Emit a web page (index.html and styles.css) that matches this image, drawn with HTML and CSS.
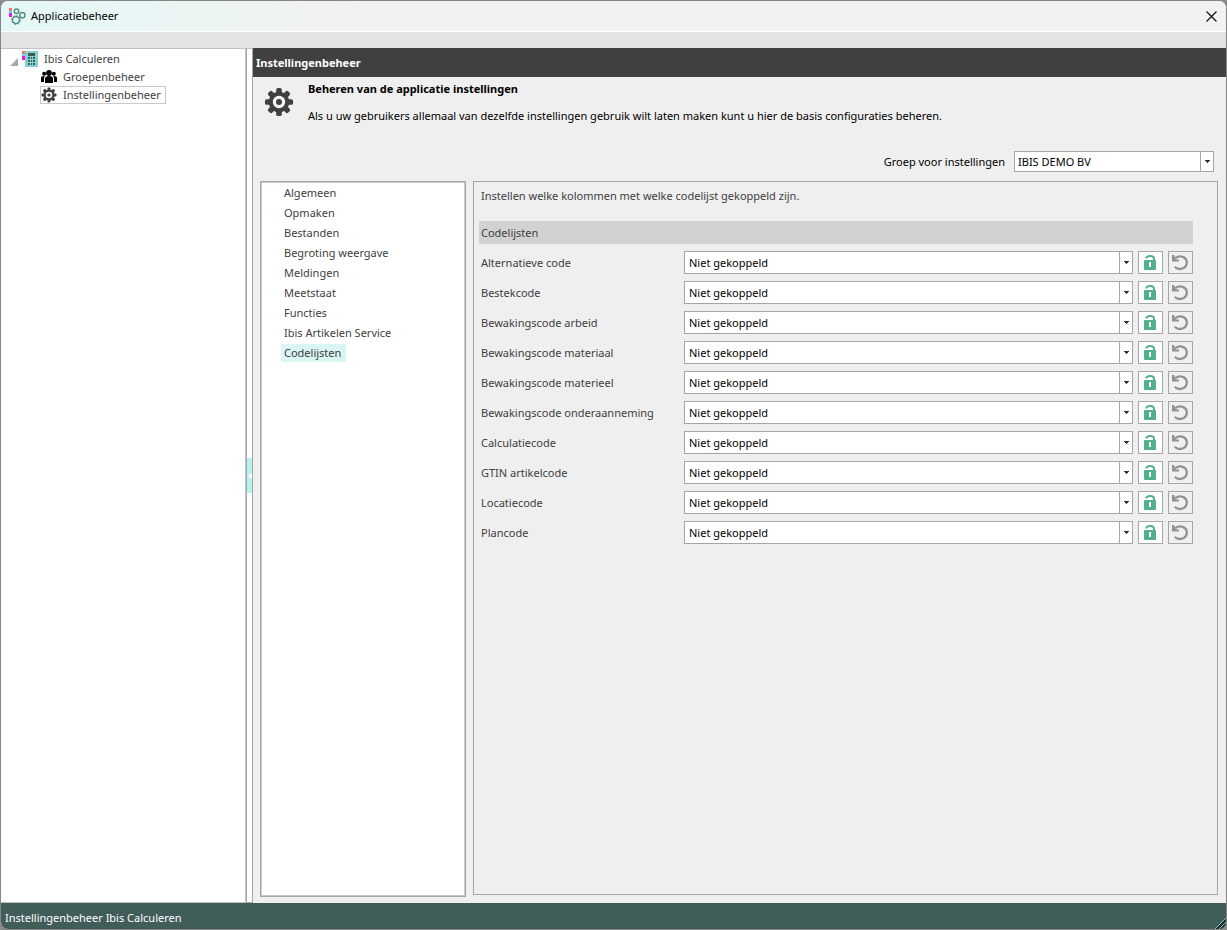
FILE: index.html
```html
<!DOCTYPE html>
<html lang="nl">
<head>
<meta charset="utf-8">
<title>Applicatiebeheer</title>
<link rel="stylesheet" href="styles.css">
</head>
<body>
<svg class="defs" aria-hidden="true">
  <symbol id="gear" viewBox="0 0 32 32">
    <g fill="#404040">
      <rect x="13" y="1" width="6" height="30" rx="2"/>
      <rect x="13" y="1" width="6" height="30" rx="2" transform="rotate(45 16 16)"/>
      <rect x="13" y="1" width="6" height="30" rx="2" transform="rotate(90 16 16)"/>
      <rect x="13" y="1" width="6" height="30" rx="2" transform="rotate(135 16 16)"/>
      <circle cx="16" cy="16" r="11"/>
    </g>
    <circle cx="16" cy="16" r="6.6" fill="#f4f4f4"/>
    <circle cx="16" cy="16" r="3.2" fill="#404040"/>
  </symbol>
  <symbol id="lock" viewBox="0 0 17 19">
    <path d="M4.200 5.600C4.200 2.200 12 2.200 12 6V9" fill="none" stroke="#52b188" stroke-width="2"/>
    <rect x="2" y="7" width="12" height="10" rx="1" fill="#52b188"/>
    <rect x="7" y="9" width="2" height="5" fill="#fff"/>
  </symbol>
  <symbol id="reset" viewBox="0 0 17 19">
    <path d="M3.500 5.200C7.500 1.800 14.800 3.600 14.800 9.500c0 6-7.800 8.600-12 4.300" fill="none" stroke="#929292" stroke-width="2.300"/>
    <path d="M0 2v6.500h7V6.400H4L2 2z" fill="#929292"/>
  </symbol>
  <symbol id="arrow" viewBox="0 0 5 3"><path d="M0 0h5v1H4v1H3v1H2V2H1V1H0z" fill="#333"/></symbol>
</svg>
<div class="window">
  <header class="titlebar">
    <svg class="logo" viewBox="0 0 17 17" aria-hidden="true">
      <path fill="#f0776a" d="M0 0h3v3H0z"/><path fill="#79c9ef" d="M0 3h3v2H0z"/><path fill="#e31be8" d="M0 5h3v4H0z"/>
      <g fill="none" stroke="#568f83" stroke-width="1.500">
        <circle cx="7.500" cy="3.200" r="2.200"/><circle cx="13.400" cy="7.200" r="2.600"/><circle cx="7" cy="12" r="3.500"/>
      </g>
      <circle cx="7" cy="12" r="4.400" fill="none" stroke="#568f83" stroke-width="1" stroke-dasharray="1.700 1.750"/>
    </svg>
    <h1 class="title">Applicatiebeheer</h1>
    <button class="close" aria-label="Sluiten"><svg viewBox="0 0 11 11" width="11" height="11"><path d="M.5.5l10 10m0-10l-10 10" stroke="#111" stroke-width="1.200"/></svg></button>
  </header>
  <div class="toolbar"></div>
  <div class="body">
    <nav class="tree">
      <a class="node root" href="#"><svg class="expander" viewBox="0 0 8 8"><path d="M8 0v8H0z" fill="#a6a6a6"/></svg><svg class="icon" viewBox="0 0 16 16"><path fill="#84d2ce" d="M3 0h13v16H3z"/><path fill="#f0776a" d="M0 0h3v3H0z"/><path fill="#79c9ef" d="M0 3h3v2H0z"/><path fill="#e31be8" d="M0 5h3v4H0z"/><path fill="#3e5d59" d="M6 2h7v3H6zM6 6h2v2H6zM9 6h1v2H9zM11 6h2v2h-2zM6 9h2v2H6zM9 9h1v2H9zM11 9h2v2h-2zM6 12h2v2H6zM9 12h1v2H9zM11 12h2v2h-2z"/></svg><span>Ibis Calculeren</span></a>
      <a class="node child" href="#"><svg class="icon" viewBox="0 0 16 16"><circle cx="8" cy="4" r="2.900"/><circle cx="3.200" cy="4.800" r="2"/><circle cx="12.800" cy="4.800" r="2"/><path d="M4 14V9.500Q4 7 8 7t4 2.500V14zM0 13V9q0-2 3-2h.800Q3 8 3 10v3zM16 13V9q0-2-3-2h-.800q.800 1 .800 3v3z"/></svg><span>Groepenbeheer</span></a>
      <a class="node child current" href="#" aria-current="page"><svg class="icon"><use href="#gear"/></svg><span>Instellingenbeheer</span></a>
    </nav>
    <div class="splitter"><button class="grip" aria-label="Paneel inklappen"><svg viewBox="0 0 4 6" width="4" height="6"><path d="M4 0v6L0 3z" fill="#fff"/></svg></button></div>
    <main class="content">
      <h2 class="heading">Instellingenbeheer</h2>
      <div class="intro">
        <svg class="intro-icon"><use href="#gear"/></svg>
        <div><h3 class="intro-title">Beheren van de applicatie instellingen</h3>
        <p class="intro-text">Als u uw gebruikers allemaal van dezelfde instellingen gebruik wilt laten maken kunt u hier de basis configuraties beheren.</p></div>
      </div>
      <div class="group">
        <label for="group">Groep voor instellingen</label>
        <div class="combo"><select id="group"><option>IBIS DEMO BV</option></select><span class="drop"><svg><use href="#arrow"/></svg></span></div>
      </div>
      <div class="panels">
        <nav class="menu">
          <a href="#">Algemeen</a>
          <a href="#">Opmaken</a>
          <a href="#">Bestanden</a>
          <a href="#">Begroting weergave</a>
          <a href="#">Meldingen</a>
          <a href="#">Meetstaat</a>
          <a href="#">Functies</a>
          <a href="#">Ibis Artikelen Service</a>
          <a class="active" href="#">Codelijsten</a>
        </nav>
        <section class="settings">
          <p class="description">Instellen welke kolommen met welke codelijst gekoppeld zijn.</p>
          <h3 class="section-title">Codelijsten</h3>
          <div class="rows">
            <div class="row"><label for="c1">Alternatieve code</label><div class="combo"><select id="c1"><option>Niet gekoppeld</option></select><span class="drop"><svg><use href="#arrow"/></svg></span></div><button class="tool lock" aria-label="Vergrendelen"><svg><use href="#lock"/></svg></button><button class="tool" aria-label="Herstellen"><svg><use href="#reset"/></svg></button></div>
            <div class="row"><label for="c2">Bestekcode</label><div class="combo"><select id="c2"><option>Niet gekoppeld</option></select><span class="drop"><svg><use href="#arrow"/></svg></span></div><button class="tool lock" aria-label="Vergrendelen"><svg><use href="#lock"/></svg></button><button class="tool" aria-label="Herstellen"><svg><use href="#reset"/></svg></button></div>
            <div class="row"><label for="c3">Bewakingscode arbeid</label><div class="combo"><select id="c3"><option>Niet gekoppeld</option></select><span class="drop"><svg><use href="#arrow"/></svg></span></div><button class="tool lock" aria-label="Vergrendelen"><svg><use href="#lock"/></svg></button><button class="tool" aria-label="Herstellen"><svg><use href="#reset"/></svg></button></div>
            <div class="row"><label for="c4">Bewakingscode materiaal</label><div class="combo"><select id="c4"><option>Niet gekoppeld</option></select><span class="drop"><svg><use href="#arrow"/></svg></span></div><button class="tool lock" aria-label="Vergrendelen"><svg><use href="#lock"/></svg></button><button class="tool" aria-label="Herstellen"><svg><use href="#reset"/></svg></button></div>
            <div class="row"><label for="c5">Bewakingscode materieel</label><div class="combo"><select id="c5"><option>Niet gekoppeld</option></select><span class="drop"><svg><use href="#arrow"/></svg></span></div><button class="tool lock" aria-label="Vergrendelen"><svg><use href="#lock"/></svg></button><button class="tool" aria-label="Herstellen"><svg><use href="#reset"/></svg></button></div>
            <div class="row"><label for="c6">Bewakingscode onderaanneming</label><div class="combo"><select id="c6"><option>Niet gekoppeld</option></select><span class="drop"><svg><use href="#arrow"/></svg></span></div><button class="tool lock" aria-label="Vergrendelen"><svg><use href="#lock"/></svg></button><button class="tool" aria-label="Herstellen"><svg><use href="#reset"/></svg></button></div>
            <div class="row"><label for="c7">Calculatiecode</label><div class="combo"><select id="c7"><option>Niet gekoppeld</option></select><span class="drop"><svg><use href="#arrow"/></svg></span></div><button class="tool lock" aria-label="Vergrendelen"><svg><use href="#lock"/></svg></button><button class="tool" aria-label="Herstellen"><svg><use href="#reset"/></svg></button></div>
            <div class="row"><label for="c8">GTIN artikelcode</label><div class="combo"><select id="c8"><option>Niet gekoppeld</option></select><span class="drop"><svg><use href="#arrow"/></svg></span></div><button class="tool lock" aria-label="Vergrendelen"><svg><use href="#lock"/></svg></button><button class="tool" aria-label="Herstellen"><svg><use href="#reset"/></svg></button></div>
            <div class="row"><label for="c9">Locatiecode</label><div class="combo"><select id="c9"><option>Niet gekoppeld</option></select><span class="drop"><svg><use href="#arrow"/></svg></span></div><button class="tool lock" aria-label="Vergrendelen"><svg><use href="#lock"/></svg></button><button class="tool" aria-label="Herstellen"><svg><use href="#reset"/></svg></button></div>
            <div class="row"><label for="c10">Plancode</label><div class="combo"><select id="c10"><option>Niet gekoppeld</option></select><span class="drop"><svg><use href="#arrow"/></svg></span></div><button class="tool lock" aria-label="Vergrendelen"><svg><use href="#lock"/></svg></button><button class="tool" aria-label="Herstellen"><svg><use href="#reset"/></svg></button></div>
          </div>
        </section>
      </div>
    </main>
  </div>
  <footer class="status"><span>Instellingenbeheer Ibis Calculeren</span><svg class="resize" viewBox="0 0 11 11"><path d="M0 11L11 0v11z" fill="#17302e"/><path d="M0 11L11 0M4 11l7-7M8 11l3-3" stroke="#8fc0b9" stroke-width="1"/></svg></footer>
</div>
</body>
</html>
```
FILE: styles.css
```css
* { box-sizing: border-box; }
body {
  margin: 0;
  background: #8b8b8b;
  font: 11px/16px "Noto Sans", "Open Sans", sans-serif;
  color: #000;
}
h1, h2, h3, p { margin: 0; font-size: 11px; font-weight: 400; }
a { color: inherit; text-decoration: none; }
button { padding: 0; border: 0; font: inherit; }
svg { display: block; flex: none; }
.defs { position: absolute; width: 0; height: 0; }

.window {
  display: flex;
  flex-direction: column;
  height: 100vh;
  border: 1px solid #858585;
  border-radius: 8px;
  overflow: hidden;
  background: #efefef;
}
.titlebar {
  display: flex;
  align-items: center;
  height: 31px;
  padding: 0 8px;
  border-bottom: 1px solid #fff;
  background: linear-gradient(90deg, #e3f8f6, #f2f2f2 360px);
}
.logo { width: 17px; height: 17px; margin-right: 5px; }
.title { flex: 1; }
.close { display: grid; place-items: center; width: 13px; height: 21px; background: none; }
.toolbar { height: 16px; background: #e3e3e3; }
.body { flex: 1; display: flex; min-height: 0; }

.tree {
  width: 245px;
  flex: none;
  padding: 1px 0 0 8px;
  border: 1px solid #c3c3c3;
  border-left: 0;
  background: #fff;
  color: #404040;
}
.node { display: flex; align-items: center; width: max-content; height: 18px; border: 1px solid transparent; }
.node span { padding-left: 6px; }
.expander { width: 8px; height: 8px; margin: 5px 4px 0 0; }
.icon { width: 16px; height: 16px; }
.child { margin-left: 31px; padding-right: 4px; }
.current { border-color: #c9c9c9; }

.splitter {
  display: flex;
  align-items: center;
  width: 7px;
  flex: none;
  border: 1px solid #a6a6a6;
  border-top-color: #c3c3c3;
  background: #fff;
}
.grip { display: grid; place-items: center; width: 5px; height: 35px; background: #b5f3ec; }

.content { flex: 1; display: flex; flex-direction: column; min-width: 0; }
.heading { padding: 7px 3px 6px; background: #404040; color: #fff; font-weight: 700; }
.intro { display: flex; gap: 14px; padding: 4px 11px 0; }
.intro-icon { width: 30px; height: 30px; margin-top: 6px; }
.intro-title { font-weight: 700; margin-bottom: 11px; }
.group { display: flex; justify-content: flex-end; align-items: center; gap: 9px; padding: 27px 12px 0 0; }
.group .combo { width: 200px; height: 21px; }

.combo { display: grid; grid-template-columns: 1fr 13px; border: 1px solid #a6a6a6; background: #fff; }
.combo select {
  grid-area: 1 / 1 / 2 / 3;
  appearance: none;
  width: 100%;
  padding: 0 16px 0 3px;
  border: 0;
  background: transparent;
  font: inherit;
  color: inherit;
}
.drop { grid-area: 1 / 2; display: grid; place-items: center; border-left: 1px solid #a6a6a6; pointer-events: none; }
.drop svg { width: 5px; height: 3px; }

.panels { flex: 1; display: flex; gap: 7px; min-height: 0; padding: 9px 8px 6px 7px; }
.menu {
  display: flex;
  flex-direction: column;
  align-items: flex-start;
  gap: 2px;
  width: 206px;
  flex: none;
  padding: 2px 20px;
  border: 1px solid #a6a6a6;
  box-shadow: inset 0 0 0 1px #c9c9c9;
  background: #fff;
  color: #404040;
}
.menu a { padding: 1px 5px 1px 3px; }
.menu .active { background: #d9f6f4; }

.settings {
  flex: 1;
  min-width: 0;
  margin-bottom: 2px;
  padding: 6px 24px 6px 5px;
  border: 1px solid #a6a6a6;
  color: #404040;
}
.description { padding-left: 2px; }
.section-title { margin-top: 17px; padding: 4px 2px 3px; background: #d2d2d2; }
.rows { display: grid; gap: 7px; margin-top: 7px; }
.row { display: grid; grid-template-columns: 198px 1fr 25px 25px; gap: 5px; height: 23px; padding-left: 2px; }
.row label { align-self: center; white-space: nowrap; }
.row .combo { color: #000; }
.row select { padding-left: 4px; }
.tool { display: grid; place-items: center; border: 1px solid #a6a6a6; background: #f0f0f0; }
.tool svg { width: 17px; height: 19px; }
.lock { background: #fff; }

.status { display: flex; align-items: center; justify-content: space-between; height: 26px; padding-left: 4px; background: #415d5a; color: #fff; }
.status span { padding-top: 3px; }
.resize { width: 11px; height: 11px; align-self: flex-end; }
```
